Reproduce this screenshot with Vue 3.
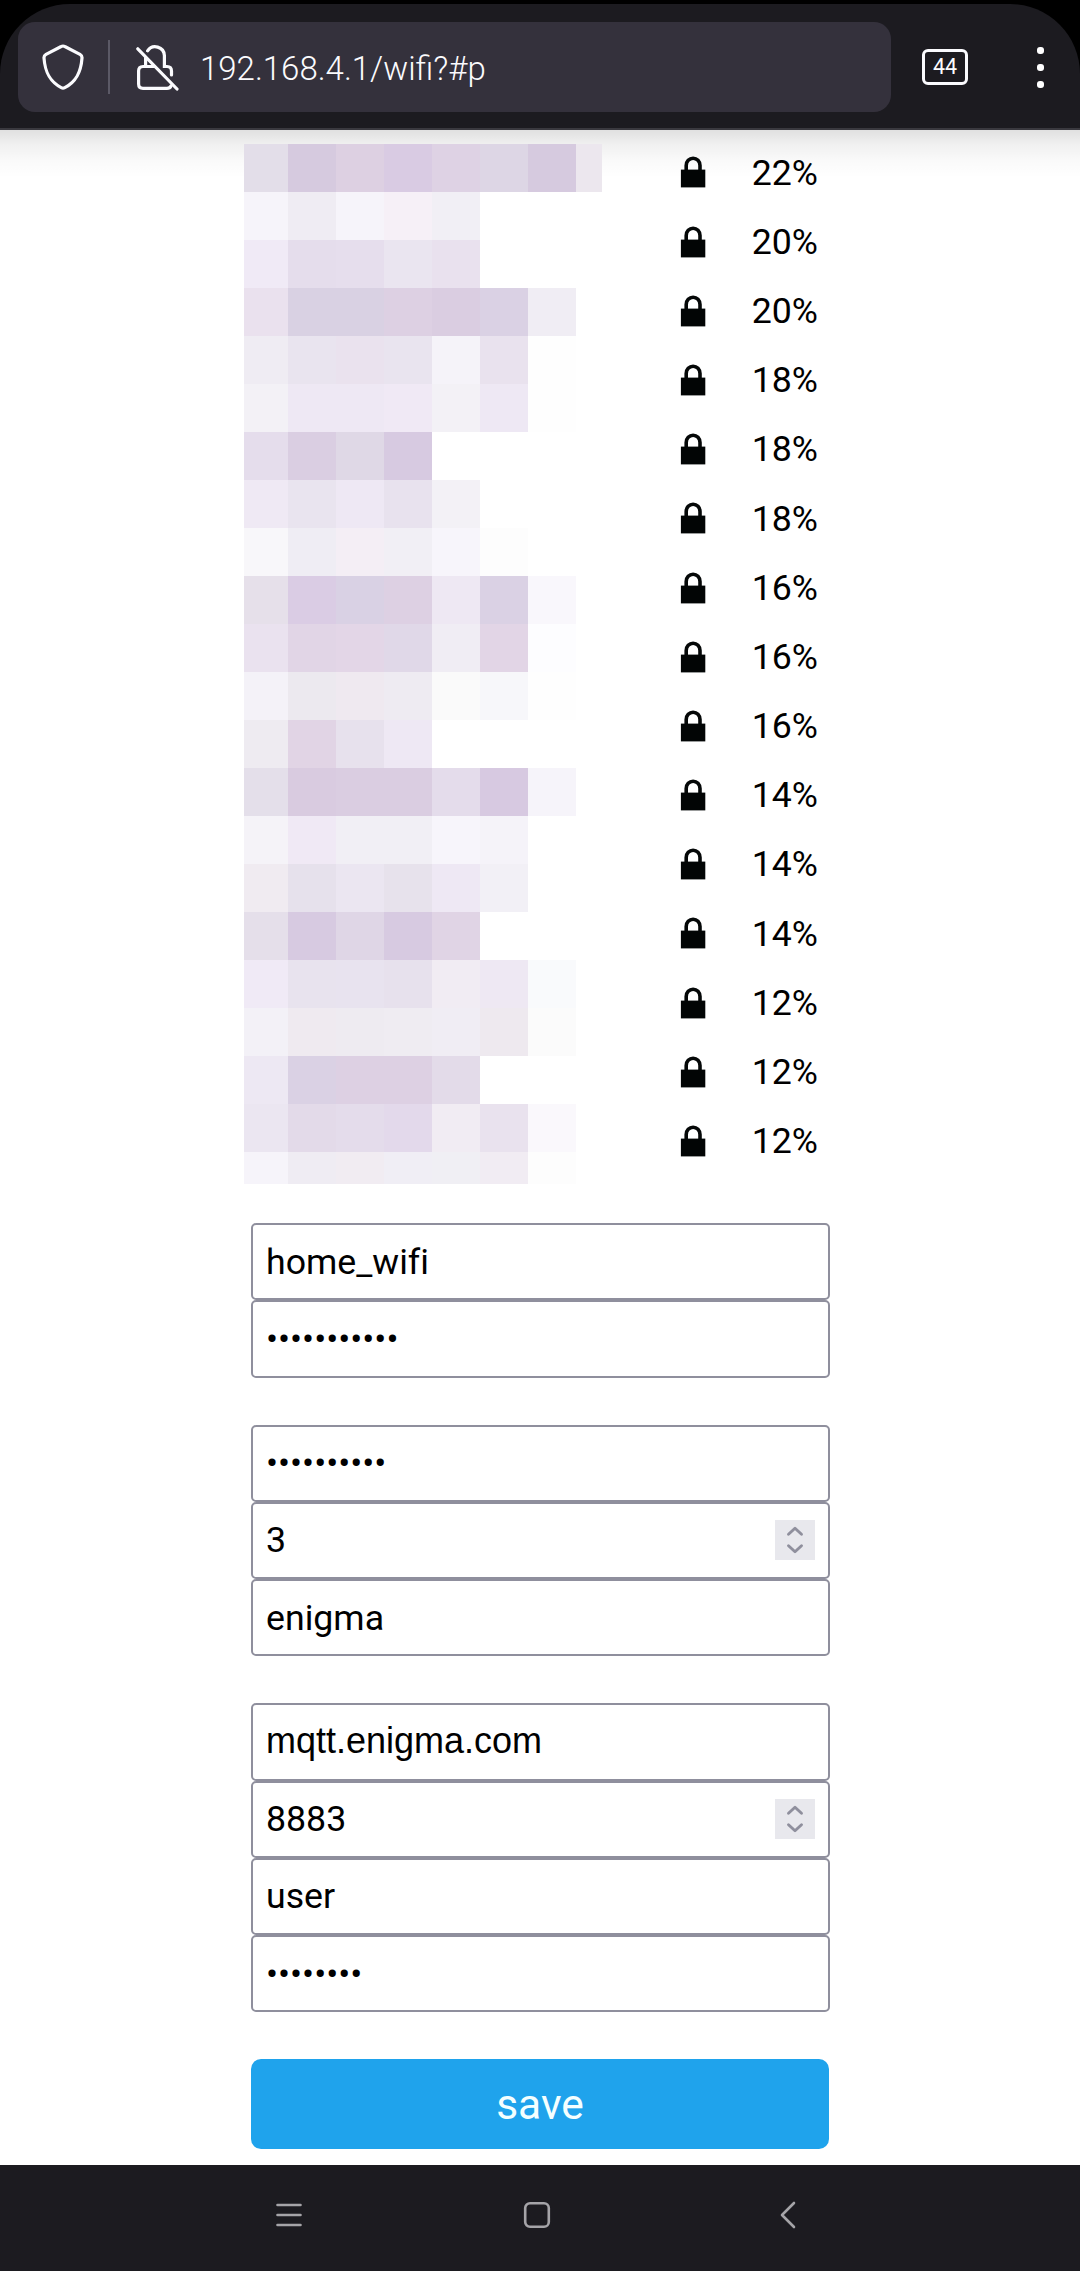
<script setup>
const mosaic = [
  'e3dee9 d6cadf ddd0e2 d9cbe3 ded2e4 ddd6e5 d6cadf ece7ee',
  'f6f4fa efecf3 f6f4fa f6f0f7 f1eff5',
  'f0eaf6 e5ddec e6deed eae5f0 e9e1ee',
  'eae1ee d9d1e3 d9d1e3 ddd0e3 dacde1 dad1e4 f0edf4',
  'efecf3 e9e4ef eae2ee e9e4ef f5f3f9 e9e2ee fefefe',
  'f3f1f6 eee8f4 eee8f4 f0e9f5 f3f1f6 eee8f4 fefefe',
  'e5ddec dacee2 dfd8e6 d7cae1',
  'efe9f4 e9e4ef eee8f4 e8e2ee f3f1f6',
  'f8f7fa efedf4 f4eef5 f1eff5 f7f5fb fdfdfd',
  'e6e0ea dacce4 d9d1e4 ddd0e3 eee8f3 dad1e4 f9f7fc',
  'eae2ef e1d5e6 e3d6e7 e0d8e8 f0edf4 e2d5e6 fdfdff',
  'f4f2f8 ece9ef efe9f0 eeebf2 fafafa f7f7fa fefefe',
  'eeebf1 e1d4e5 e7e1ed eee8f4',
  'e4dfea d9cbe0 dacde1 dacde1 e4dceb d7c9e1 f6f4fa',
  'f5f3f8 f0e9f5 f1eff5 f1eff5 f7f5fb f5f3f9',
  'f0ebf1 e6e1ec ebe6f1 e7e2ec eee8f4 f2f0f6',
  'e5dfea d7cae1 dfd6e6 d7cae1 e0d4e5',
  'f0eaf6 e8e3ee e8e3ef e7e1ed f1ecf3 eee8f3 f9fafc',
  'f3f1f7 efeaf0 eeebf1 efecf2 f0edf4 eee9ef fbfbfb',
  'ede8f3 dad1e4 ddd0e3 ddd0e3 e3dbe9',
  'ebe6f1 e3dae9 e4dceb e3d9eb f1ecf3 e9e2ee faf8fc',
  'f6f4fa efecf3 f1ecf2 f0eef5 f0eff4 f1ecf3 fdfdfd',
].map((row) => row.split(' ').map((c) => '#' + c))

const signals = [22, 20, 20, 18, 18, 18, 16, 16, 16, 14, 14, 14, 12, 12, 12]

const dots = (n) => '•'.repeat(n)

const groups = [
  [{ text: 'home_wifi' }, { text: dots(11), kind: 'secret' }],
  [{ text: dots(10), kind: 'secret' }, { text: '3', kind: 'number' }, { text: 'enigma' }],
  [
    { text: 'mqtt.enigma.com', kind: 'host' },
    { text: '8883', kind: 'number' },
    { text: 'user' },
    { text: dots(8), kind: 'secret' },
  ],
]
</script>

<template>
  <div class="screen">
    <header class="top">
      <div class="toolbar">
        <div class="urlbar">
          <svg class="shield" width="42" height="46" viewBox="0 0 42 46">
            <path d="M19.2 2.5Q21 1.5 22.8 2.5L38 10.3Q40.200 11.600 40 14C39 28 34.500 37.500 22.800 43.600Q21 44.500 19.200 43.600C7.500 37.500 3 28 2 14Q1.800 11.600 4 10.300Z" fill="none" stroke="#fbfbfe" stroke-width="3.200" stroke-linejoin="round" />
          </svg>
          <span class="divider"></span>
          <svg class="nolock" width="43" height="47" viewBox="0 0 43 47">
            <g fill="none" stroke="#fbfbfe" stroke-width="3.200" stroke-linecap="round">
              <path d="M11.600 6.800A9.200 9.200 0 0 1 28.400 11.500V22.500H31Q35.500 22.500 35.500 27V31" />
              <path d="M9.600 14V22.500M18 22.500H7Q2.600 22.500 2.600 27V40Q2.600 44.300 7 44.300H31Q34 44.300 35 42" />
              <path d="M1.800 4.800L41 45" />
            </g>
          </svg>
          <span class="url">192.168.4.1/wifi?#p</span>
        </div>
        <div class="tabs">44</div>
        <div class="menu"><i></i><i></i><i></i></div>
      </div>
      <div class="shade"></div>
    </header>

    <main class="page">
      <section class="networks">
        <div class="mosaic">
          <div v-for="(row, r) in mosaic" :key="r" class="mrow">
            <span v-for="(c, i) in row" :key="i" class="cell" :style="{ background: c }"></span>
          </div>
        </div>
        <ul class="signals">
          <li v-for="(s, i) in signals" :key="i">
            <svg width="26" height="32" viewBox="0 0 26 32">
              <path d="M6.200 15V9.500A6.900 7.300 0 0 1 20 9.500V15" fill="none" stroke="#050808" stroke-width="3.600" />
              <rect x="0.900" y="13.600" width="24.400" height="17.800" fill="#020505" />
            </svg>
            <span>{{ s }}%</span>
          </li>
        </ul>
      </section>

      <form class="form" @submit.prevent>
        <div v-for="(g, gi) in groups" :key="gi" class="group">
          <div v-for="(f, fi) in g" :key="fi" class="field" :class="f.kind">
            <span class="value">{{ f.text }}</span>
            <svg v-if="f.kind === 'number'" class="spin" width="40" height="40" viewBox="0 0 40 40">
              <path d="M13.500 14.300L20 8.300L26.500 14.300M13.500 25.700L20 31.700L26.500 25.700" fill="none" stroke="#8f8f9d" stroke-width="2.900" stroke-linecap="round" stroke-linejoin="round" />
            </svg>
          </div>
        </div>
        <button class="save" type="submit">save</button>
      </form>
    </main>

    <nav class="nav">
      <svg class="recent" width="26" height="28" viewBox="0 0 26 28">
        <path d="M1.500 4H24.500M1.500 14H24.500M1.500 24H24.500" stroke="#a5a4a8" stroke-width="2.600" stroke-linecap="round" />
      </svg>
      <svg class="home" width="28" height="28" viewBox="0 0 28 28">
        <rect x="2.200" y="2.200" width="23.600" height="23.600" rx="4.800" fill="none" stroke="#a5a4a8" stroke-width="2.600" />
      </svg>
      <svg class="back" width="16" height="28" viewBox="0 0 16 28">
        <path d="M14 2L2 14L14 26" fill="none" stroke="#a5a4a8" stroke-width="2.600" stroke-linecap="round" stroke-linejoin="round" />
      </svg>
    </nav>
  </div>
</template>

<style>
body {
  margin: 0;
  background: #fff;
}
</style>

<style scoped>
.screen {
  width: 1080px;
  height: 2271px;
  display: flex;
  flex-direction: column;
  overflow: hidden;
  background: #fff;
  color: #000;
  font-family: Roboto, "Liberation Sans", sans-serif;
}
.top {
  position: relative;
  flex: none;
  height: 130px;
  box-sizing: border-box;
  padding-top: 4px;
  background: #000;
}
.toolbar {
  height: 126px;
  box-sizing: border-box;
  display: flex;
  align-items: flex-start;
  padding: 18px 0 0 18px;
  background: #1c1b20;
  border-bottom: 2px solid #3a393f;
  border-radius: 70px 70px 0 0;
}
.urlbar {
  width: 873px;
  height: 90px;
  box-sizing: border-box;
  display: flex;
  align-items: center;
  padding-left: 24px;
  border-radius: 17px;
  background: #34313c;
}
.divider {
  width: 2px;
  height: 54px;
  margin-left: 24px;
  background: #5b5966;
}
.nolock {
  margin-left: 26px;
}
.url {
  margin-left: 21px;
  padding-top: 4px;
  color: #fbfbfe;
  font-size: 33px;
  font-weight: 300;
  line-height: 46px;
}
.tabs {
  width: 46px;
  height: 36px;
  box-sizing: border-box;
  margin: 27px 0 0 31px;
  border: 3.500px solid #fbfbfe;
  border-radius: 6px;
  color: #fbfbfe;
  font-size: 21.500px;
  line-height: 30px;
  text-align: center;
}
.menu {
  display: flex;
  flex-direction: column;
  gap: 10px;
  margin: 24.500px 0 0 69px;
}
.menu i {
  width: 7px;
  height: 7px;
  border-radius: 3px;
  background: #fff;
}
.shade {
  position: absolute;
  left: 0;
  top: 130px;
  width: 100%;
  height: 48px;
  background: linear-gradient(rgba(0, 0, 0, 0.120), rgba(0, 0, 0, 0.060) 30%, rgba(0, 0, 0, 0.020) 65%, transparent);
}
.page {
  flex: none;
  height: 2035px;
}
.networks {
  display: flex;
  align-items: flex-start;
  height: 1093.100px;
  padding-left: 244px;
}
.mosaic {
  position: relative;
  width: 358px;
  margin-top: 14px;
}
.mrow {
  display: flex;
  height: 48px;
}
.mrow:last-child {
  height: 32px;
}
.cell {
  width: 48px;
}
.cell:first-child {
  width: 44px;
}
.cell:nth-child(8) {
  width: 26px;
}
.signals {
  margin: 6.800px 0 0 78.400px;
  padding: 0;
  list-style: none;
}
.signals li {
  display: flex;
  align-items: center;
  height: 69.200px;
  font-size: 35.700px;
}
.signals svg {
  margin-top: 2px;
}
.signals span {
  margin-left: 45.300px;
  padding-top: 2.400px;
}
.form {
  width: 579px;
  margin-left: 251px;
}
.group {
  margin-bottom: 47px;
}
.field {
  height: 77.250px;
  box-sizing: border-box;
  display: flex;
  align-items: center;
  justify-content: space-between;
  padding: 0 13px;
  border: 2px solid #8f8f9d;
  border-radius: 5px;
  font-size: 35.700px;
  font-variant-ligatures: none;
}
.host .value {
  font-family: "Liberation Sans", Arial, sans-serif;
  font-size: 36px;
  padding-bottom: 1px;
}
.spin {
  background: #e8e8ed;
}
.save {
  display: block;
  width: 578px;
  height: 90px;
  padding: 2px 0 0;
  border: 0;
  border-radius: 10px;
  background: #1fa3ec;
  color: #f4ffff;
  font-family: inherit;
  font-size: 42.500px;
  line-height: 88px;
}
.nav {
  flex: 1;
  display: flex;
  align-items: center;
  padding: 0 0 6px 276px;
  background: #1c1b20;
}
.home {
  margin-left: 221px;
}
.back {
  margin-left: 228.500px;
}
</style>
